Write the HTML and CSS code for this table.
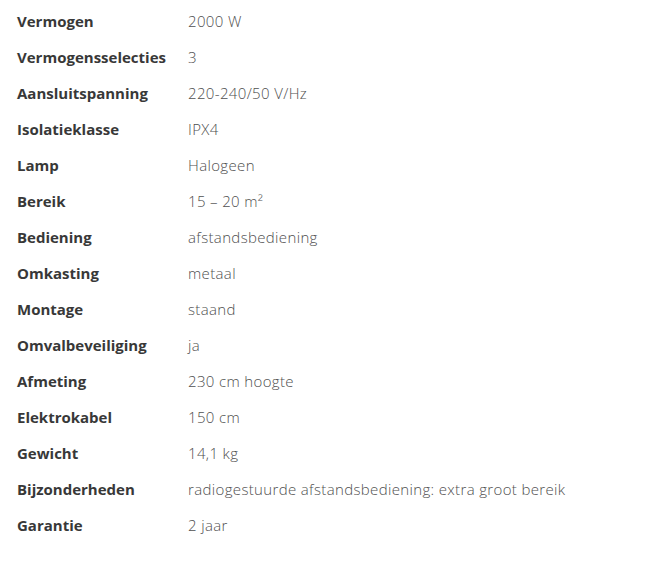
FILE: index.html
```html
<!DOCTYPE html>
<html lang="nl">
<head>
<meta charset="utf-8">
<link rel="stylesheet" href="styles.css">
</head>
<body>
<dl class="specs">
  <div class="row"><dt>Vermogen</dt><dd>2000 W</dd></div>
  <div class="row"><dt>Vermogensselecties</dt><dd>3</dd></div>
  <div class="row"><dt>Aansluitspanning</dt><dd>220-240/50 V/Hz</dd></div>
  <div class="row"><dt>Isolatieklasse</dt><dd>IPX4</dd></div>
  <div class="row"><dt>Lamp</dt><dd>Halogeen</dd></div>
  <div class="row"><dt>Bereik</dt><dd>15 – 20 m²</dd></div>
  <div class="row"><dt>Bediening</dt><dd>afstandsbediening</dd></div>
  <div class="row"><dt>Omkasting</dt><dd>metaal</dd></div>
  <div class="row"><dt>Montage</dt><dd>staand</dd></div>
  <div class="row"><dt>Omvalbeveiliging</dt><dd>ja</dd></div>
  <div class="row"><dt>Afmeting</dt><dd>230 cm hoogte</dd></div>
  <div class="row"><dt>Elektrokabel</dt><dd>150 cm</dd></div>
  <div class="row"><dt>Gewicht</dt><dd>14,1 kg</dd></div>
  <div class="row"><dt>Bijzonderheden</dt><dd>radiogestuurde afstandsbediening: extra groot bereik</dd></div>
  <div class="row"><dt>Garantie</dt><dd>2 jaar</dd></div>
</dl>
</body>
</html>
```
FILE: styles.css
```css
html, body {
  margin: 0;
  padding: 0;
  background: #ffffff;
}
.specs {
  margin: 0;
  padding: 3px 0 0 17px;
  display: flex;
  flex-direction: column;
}
.row {
  display: grid;
  grid-template-columns: 171px 1fr;
  align-items: center;
  height: 36px;
}
.row dt {
  font-family: "Open Sans", "Liberation Sans", sans-serif;
  font-weight: 700;
  font-size: 15px;
  color: #383838;
}
.row dd {
  margin: 0;
  font-family: "Open Sans", "Liberation Sans", sans-serif;
  font-weight: 300;
  font-size: 15px;
  letter-spacing: 0.35px;
  color: #4f4f4f;
}
```
